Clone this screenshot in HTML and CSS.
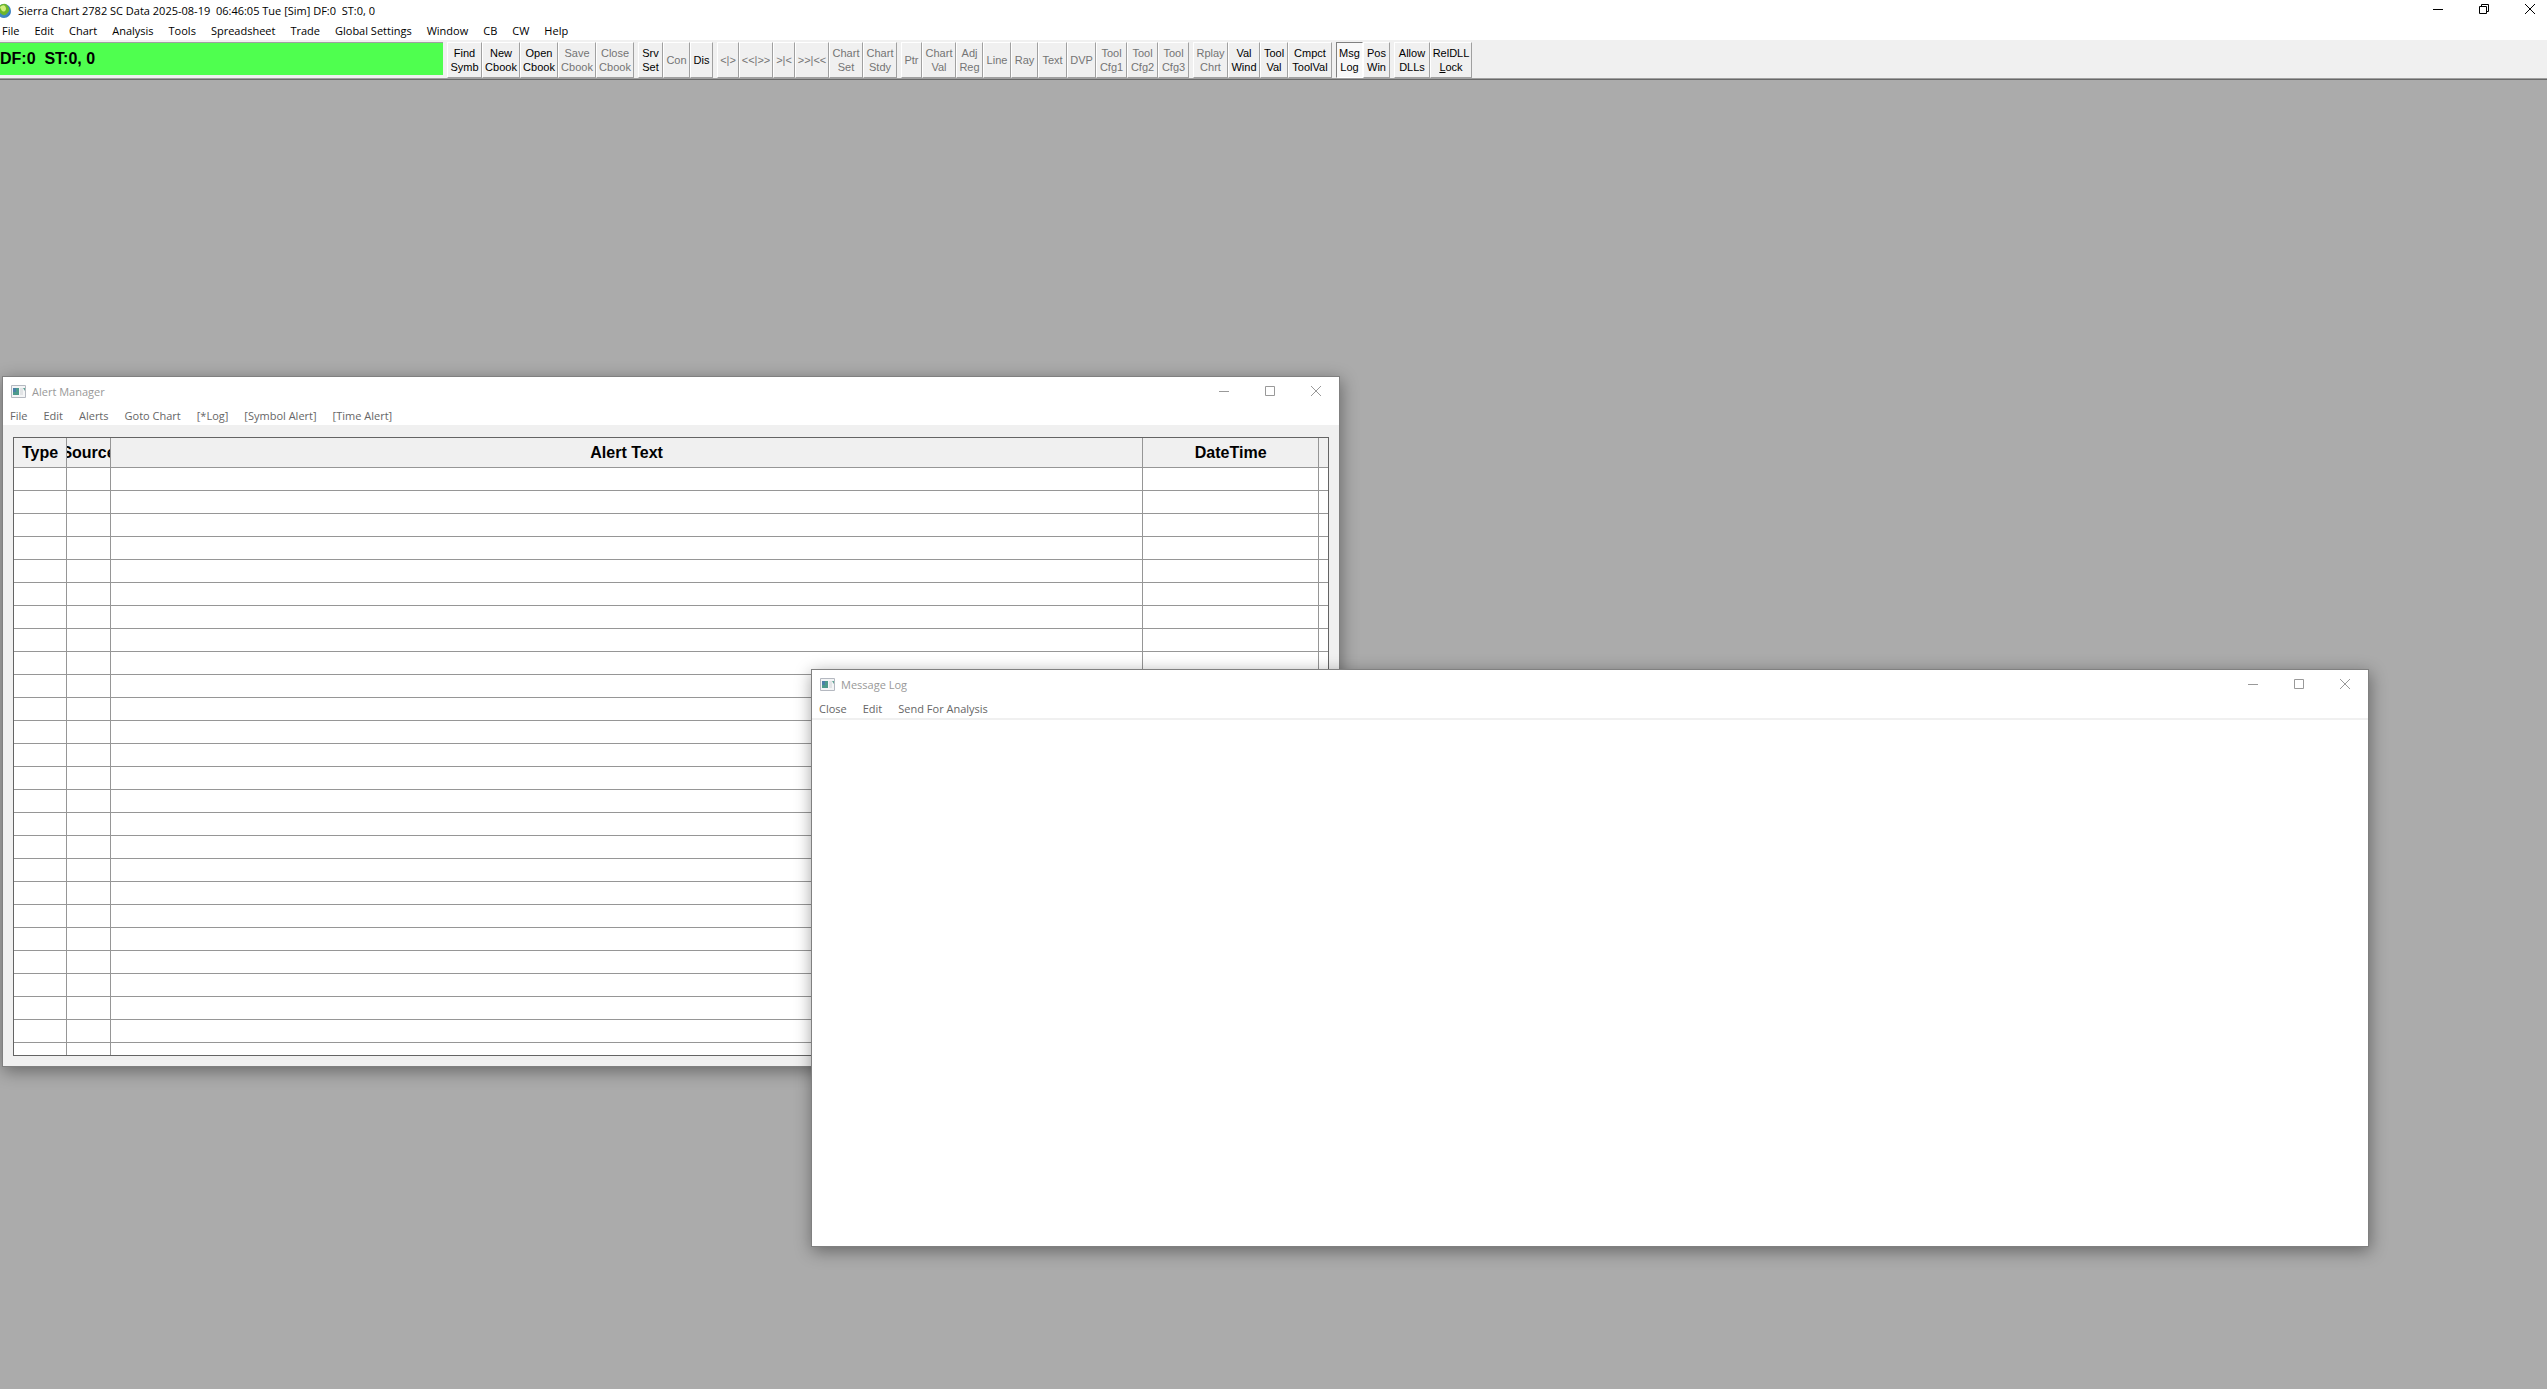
FILE: index.html
```html
<!DOCTYPE html>
<html lang="en">
<head>
  <meta charset="UTF-8" />
  <meta name="viewport" content="width=device-width, initial-scale=1.0"/>
  <title>Sierra Chart</title>
  <link rel="stylesheet" href="styles.css">
</head>
<body>

<header class="app-top">
  <div class="app-title">
    <svg class="globe" width="12" height="16" viewBox="4 0 12 16" aria-hidden="true">
      <circle cx="8" cy="9" r="7" fill="#3f86c4"/>
      <path d="M3 4q5-4 8-1q3 3 2 6q-3 5-6 4q-5-2-4-9z" fill="#6db52c"/>
      <path d="M4 5q3-3 5-1q2 3 0 5q-3 2-5-4z" fill="#d3ef7c"/>
      <path d="M9 15q5-1 6-6q-2 5-6 6z" fill="#25589b"/>
    </svg>
    <h1>Sierra Chart 2782 SC Data 2025-08-19 &nbsp;06:46:05 Tue [Sim] DF:0 &nbsp;ST:0, 0</h1>
    <div class="controls app-controls">
      <button aria-label="Minimize"><svg width="10" height="10"><path d="M0 5.500h10"/></svg></button>
      <button aria-label="Restore"><svg width="10" height="10"><path d="M.5 2.500h7v7h-7zM2.500 2.500v-2h7v7h-2"/></svg></button>
      <button aria-label="Close"><svg width="10" height="10"><path d="M0 0l10 10M10 0L0 10"/></svg></button>
    </div>
  </div>

  <nav class="menu app-menu">
    <button>File</button>
    <button>Edit</button>
    <button>Chart</button>
    <button>Analysis</button>
    <button>Tools</button>
    <button>Spreadsheet</button>
    <button>Trade</button>
    <button>Global Settings</button>
    <button>Window</button>
    <button>CB</button>
    <button>CW</button>
    <button>Help</button>
  </nav>

  <div class="toolbar">
    <div class="status">DF:0 &nbsp;ST:0, 0</div>
    <div class="group">
      <button class="w35">Find<br>Symb</button>
      <button class="w38">New<br>Cbook</button>
      <button class="w38">Open<br>Cbook</button>
      <button class="w38" disabled>Save<br>Cbook</button>
      <button class="w38" disabled>Close<br>Cbook</button>
    </div>
    <div class="group">
      <button class="w25">Srv<br>Set</button>
      <button class="w27" disabled>Con</button>
      <button class="w23">Dis</button>
    </div>
    <div class="group">
      <button class="w22" disabled>&lt;|&gt;</button>
      <button class="w34" disabled>&lt;&lt;|&gt;&gt;</button>
      <button class="w22" disabled>&gt;|&lt;</button>
      <button class="w34" disabled>&gt;&gt;|&lt;&lt;</button>
      <button class="w34" disabled>Chart<br>Set</button>
      <button class="w34" disabled>Chart<br>Stdy</button>
    </div>
    <div class="group">
      <button class="w21" disabled>Ptr</button>
      <button class="w34" disabled>Chart<br>Val</button>
      <button class="w27" disabled>Adj<br>Reg</button>
      <button class="w28" disabled>Line</button>
      <button class="w27" disabled>Ray</button>
      <button class="w29" disabled>Text</button>
      <button class="w29" disabled>DVP</button>
      <button class="w31" disabled>Tool<br>Cfg1</button>
      <button class="w31" disabled>Tool<br>Cfg2</button>
      <button class="w31" disabled>Tool<br>Cfg3</button>
    </div>
    <div class="group">
      <button class="w35" disabled>Rplay<br>Chrt</button>
      <button class="w32">Val<br>Wind</button>
      <button class="w28">Tool<br>Val</button>
      <button class="w44">Cmpct<br>ToolVal</button>
    </div>
    <div class="group">
      <button class="w27 pressed">Msg<br>Log</button>
      <button class="w27">Pos<br>Win</button>
    </div>
    <div class="group">
      <button class="w36">Allow<br>DLLs</button>
      <button class="w42">RelDLL<br><u>L</u>ock</button>
    </div>
  </div>
</header>

<main class="desktop">
  <section class="window alerts">
    <div class="title">
      <svg class="app-icon" width="15" height="13" viewBox="0 0 15 13" aria-hidden="true">
        <path d="M.5.500h14v12H.5z" fill="#f4f5f6" stroke="#b4b8c0"/>
        <path d="M2 3h6v7H2z" fill="#4c9a8c"/>
        <path d="M2 3h3v4H2z" fill="#4a7fa8"/>
        <path d="M9 3h3v7H9z" fill="#e2e4e6"/>
        <path d="M12 3h2v3z" fill="#5ea394"/>
      </svg>
      <h2>Alert Manager</h2>
      <div class="controls">
        <button aria-label="Minimize"><svg width="10" height="10"><path d="M0 5.500h10"/></svg></button>
        <button aria-label="Maximize"><svg width="10" height="10"><path d="M.5.500h9v9h-9z"/></svg></button>
        <button aria-label="Close"><svg width="10" height="10"><path d="M0 0l10 10M10 0L0 10"/></svg></button>
      </div>
    </div>
    <nav class="menu">
      <button>File</button>
      <button>Edit</button>
      <button>Alerts</button>
      <button>Goto Chart</button>
      <button>[*Log]</button>
      <button>[Symbol Alert]</button>
      <button>[Time Alert]</button>
    </nav>
    <div class="alerts-body">
      <div class="grid">
        <table>
          <colgroup>
            <col class="col-type">
            <col class="col-source">
            <col>
            <col class="col-time">
            <col class="col-end">
          </colgroup>
          <thead>
            <tr><th><span>Type</span></th><th><span>Source</span></th><th><span>Alert Text</span></th><th><span>DateTime</span></th><th></th></tr>
          </thead>
          <tbody>
            <tr><td></td><td></td><td></td><td></td><td></td></tr>
            <tr><td></td><td></td><td></td><td></td><td></td></tr>
            <tr><td></td><td></td><td></td><td></td><td></td></tr>
            <tr><td></td><td></td><td></td><td></td><td></td></tr>
            <tr><td></td><td></td><td></td><td></td><td></td></tr>
            <tr><td></td><td></td><td></td><td></td><td></td></tr>
            <tr><td></td><td></td><td></td><td></td><td></td></tr>
            <tr><td></td><td></td><td></td><td></td><td></td></tr>
            <tr><td></td><td></td><td></td><td></td><td></td></tr>
            <tr><td></td><td></td><td></td><td></td><td></td></tr>
            <tr><td></td><td></td><td></td><td></td><td></td></tr>
            <tr><td></td><td></td><td></td><td></td><td></td></tr>
            <tr><td></td><td></td><td></td><td></td><td></td></tr>
            <tr><td></td><td></td><td></td><td></td><td></td></tr>
            <tr><td></td><td></td><td></td><td></td><td></td></tr>
            <tr><td></td><td></td><td></td><td></td><td></td></tr>
            <tr><td></td><td></td><td></td><td></td><td></td></tr>
            <tr><td></td><td></td><td></td><td></td><td></td></tr>
            <tr><td></td><td></td><td></td><td></td><td></td></tr>
            <tr><td></td><td></td><td></td><td></td><td></td></tr>
            <tr><td></td><td></td><td></td><td></td><td></td></tr>
            <tr><td></td><td></td><td></td><td></td><td></td></tr>
            <tr><td></td><td></td><td></td><td></td><td></td></tr>
            <tr><td></td><td></td><td></td><td></td><td></td></tr>
            <tr><td></td><td></td><td></td><td></td><td></td></tr>
            <tr><td></td><td></td><td></td><td></td><td></td></tr>
          </tbody>
        </table>
      </div>
    </div>
  </section>

  <section class="window log">
    <div class="title">
      <svg class="app-icon" width="15" height="13" viewBox="0 0 15 13" aria-hidden="true">
        <path d="M.5.500h14v12H.5z" fill="#f4f5f6" stroke="#b4b8c0"/>
        <path d="M2 3h6v7H2z" fill="#4c9a8c"/>
        <path d="M2 3h3v4H2z" fill="#4a7fa8"/>
        <path d="M9 3h3v7H9z" fill="#e2e4e6"/>
        <path d="M12 3h2v3z" fill="#5ea394"/>
      </svg>
      <h2>Message Log</h2>
      <div class="controls">
        <button aria-label="Minimize"><svg width="10" height="10"><path d="M0 5.500h10"/></svg></button>
        <button aria-label="Maximize"><svg width="10" height="10"><path d="M.5.500h9v9h-9z"/></svg></button>
        <button aria-label="Close"><svg width="10" height="10"><path d="M0 0l10 10M10 0L0 10"/></svg></button>
      </div>
    </div>
    <nav class="menu">
      <button>Close</button>
      <button>Edit</button>
      <button>Send For Analysis</button>
    </nav>
    <div class="log-body"></div>
  </section>
</main>

</body>
</html>
```
FILE: styles.css
```css
* {
  box-sizing: border-box;
}

body {
  margin: 0;
  height: 100vh;
  display: flex;
  flex-direction: column;
  overflow: hidden;
  font-family: "Open Sans", "Noto Sans", sans-serif;
  font-size: 11px;
  background: #ababab;
  color: #000;
}

button {
  margin: 0;
  padding: 0;
  border: none;
  background: none;
  font: inherit;
  color: inherit;
}

h1, h2 {
  margin: 0;
  font-size: 11px;
  font-weight: 400;
  white-space: nowrap;
}

/* main window */
.app-top {
  background: #fff;
  border-bottom: 1px solid #696969;
}

.app-title {
  display: flex;
  align-items: center;
  height: 20px;
}

.globe {
  margin-right: 6px;
}

.controls {
  display: flex;
  margin-left: auto;
}

.controls button {
  display: flex;
  align-items: center;
  justify-content: center;
  width: 46px;
  height: 28px;
}

.app-controls {
  align-self: flex-start;
  margin-right: -6px;
}

.app-controls button {
  height: 18px;
}

.controls path {
  fill: none;
  stroke: currentColor;
}

.menu {
  display: flex;
  gap: 16px;
  height: 20px;
  line-height: 22px;
  padding: 0 7px;
  white-space: nowrap;
}

.app-menu {
  gap: 15px;
  padding: 0 2px;
}

/* toolbar */
.toolbar {
  display: flex;
  gap: 4px;
  height: 39px;
  padding-top: 2px;
  background: #f0f0f0;
  border-bottom: 1px solid #a0a0a0;
  font-family: "Liberation Sans", Arial, sans-serif;
}

.status {
  width: 443px;
  height: 33px;
  border-top: 1px solid #a0a0a0;
  background: #4fff4f;
  font-size: 16px;
  font-weight: 700;
  line-height: 32px;
}

.group {
  display: flex;
}

.group button {
  border-left: 1px solid #fff;
  border-top: 1px solid #fff;
  border-right: 1px solid #a0a0a0;
  border-bottom: 1px solid #a0a0a0;
  line-height: 14px;
  white-space: nowrap;
}

.group button:disabled {
  color: #747474;
}

.group .pressed {
  border-color: #808080 #fff #fff #808080;
  background: #f8f8f8;
}

.w21 { width: 21px; }
.w22 { width: 22px; }
.w23 { width: 23px; }
.w25 { width: 25px; }
.w27 { width: 27px; }
.w28 { width: 28px; }
.w29 { width: 29px; }
.w31 { width: 31px; }
.w32 { width: 32px; }
.w34 { width: 34px; }
.w35 { width: 35px; }
.w36 { width: 36px; }
.w38 { width: 38px; }
.w42 { width: 42px; }
.w44 { width: 44px; }

/* floating windows */
.desktop {
  position: relative;
  flex: 1;
}

.window {
  position: absolute;
  display: flex;
  flex-direction: column;
  background: #fff;
  border: 1px solid #808080;
  box-shadow: 1px 4px 16px rgba(0, 0, 0, 0.4);
  color: #666;
}

.title {
  display: flex;
  align-items: center;
  height: 28px;
  padding-left: 8px;
  color: #999;
}

.app-icon {
  margin-right: 6px;
}

.alerts {
  left: 2px;
  top: 296px;
  width: 52.54%;
  height: 691px;
}

.log {
  left: 811px;
  top: 589px;
  width: 61.18%;
  height: 578px;
}

.log-body {
  flex: 1;
  border-top: 2px solid #f0f0f0;
}

.alerts-body {
  flex: 1;
  min-height: 0;
  padding: 12px 10px 10px;
  background: #f0f0f0;
}

.grid {
  height: 100%;
  overflow: hidden;
  border: 1px solid #646464;
  background: #fff;
}

table {
  width: 100%;
  table-layout: fixed;
  border-collapse: separate;
  border-spacing: 0;
}

.col-type { width: 53px; }
.col-source { width: 44px; }
.col-time { width: 176px; }
.col-end { width: 9px; }

th, td {
  height: 23px;
  padding: 0;
  border-right: 1px solid #969696;
  border-bottom: 1px solid #969696;
}

th:last-child, td:last-child {
  border-right: none;
}

th {
  height: 30px;
  overflow: hidden;
  background: #f0f0f0;
  color: #000;
  font-family: "Liberation Sans", Arial, sans-serif;
  font-size: 16px;
}

/* keeps a heading centred when its column is too narrow for it */
th span {
  display: flex;
  justify-content: center;
}
```
